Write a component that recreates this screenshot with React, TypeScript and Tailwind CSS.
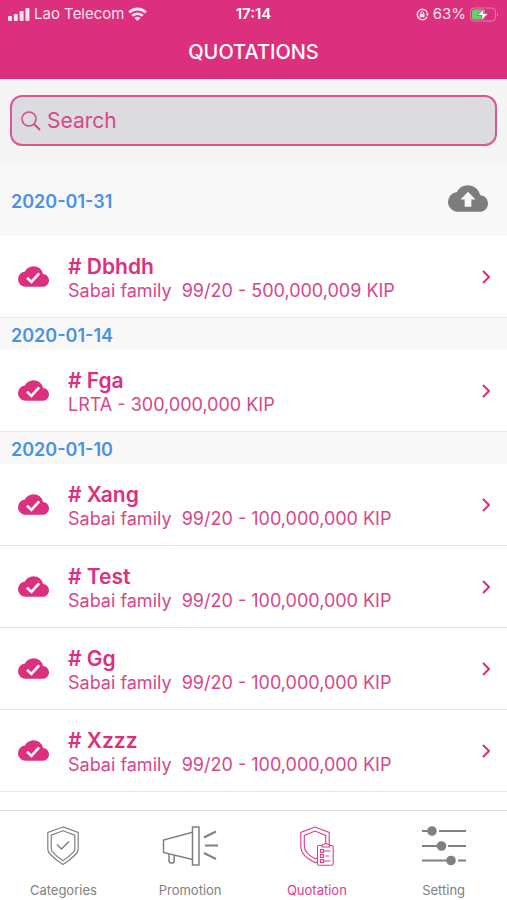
import { useState } from 'react'

const PINK = '#dc2f7d'

type Quote = { id: number; name: string; detail: string }
type Group = { date: string; canUpload?: boolean; quotes: Quote[] }

const groups: Group[] = [
  {
    date: '2020-01-31',
    canUpload: true,
    quotes: [{ id: 1, name: 'Dbhdh', detail: 'Sabai family  99/20 - 500,000,009 KIP' }],
  },
  {
    date: '2020-01-14',
    quotes: [{ id: 2, name: 'Fga', detail: 'LRTA - 300,000,000 KIP' }],
  },
  {
    date: '2020-01-10',
    quotes: [
      { id: 3, name: 'Xang', detail: 'Sabai family  99/20 - 100,000,000 KIP' },
      { id: 4, name: 'Test', detail: 'Sabai family  99/20 - 100,000,000 KIP' },
      { id: 5, name: 'Gg', detail: 'Sabai family  99/20 - 100,000,000 KIP' },
      { id: 6, name: 'Xzzz', detail: 'Sabai family  99/20 - 100,000,000 KIP' },
    ],
  },
]

function SignalIcon() {
  return (
    <svg width="22" height="13" viewBox="0 0 22 13" fill="currentColor">
      <rect x="0" y="8" width="4" height="5" rx="1" />
      <rect x="5.8" y="6" width="4" height="7" rx="1" />
      <rect x="11.6" y="3" width="4" height="10" rx="1" />
      <rect x="17.4" y="0" width="4" height="13" rx="1" />
    </svg>
  )
}

function WifiIcon() {
  return (
    <svg width="19" height="14" viewBox="0 0 19 14" fill="none" stroke="currentColor" strokeWidth="2.8">
      <path d="M1.2 5.4a11.800 11.800 0 0 1 16.600 0" />
      <path d="M4.2 8.9a7.600 7.600 0 0 1 10.600 0" strokeWidth="2.4" />
      <path d="M9.5 14 6.400 11a4.400 4.400 0 0 1 6.200 0Z" fill="currentColor" stroke="none" />
    </svg>
  )
}

function RotationLockIcon() {
  return (
    <svg width="13" height="13" viewBox="0 0 14 14" fill="none" stroke="currentColor">
      <path d="M12.2 5.2A5.6 5.6 0 1 0 12 9.4" strokeWidth="1.5" />
      <path d="M10.4 6h3.6l-1.8 2.8Z" fill="currentColor" stroke="none" />
      <rect x="4" y="6.2" width="5.2" height="3.8" rx="0.6" fill="currentColor" stroke="none" />
      <path d="M5.2 6.4V5.2a1.4 1.4 0 0 1 2.8 0v1.2" strokeWidth="1" />
    </svg>
  )
}

function BatteryIcon() {
  return (
    <svg width="29" height="15" viewBox="0 0 29 15">
      <rect x="0.5" y="1" width="25" height="13" rx="3.5" fill="none" stroke="#ea79ad" />
      <path d="M27 5.4c1.5.5 1.5 3.7 0 4.2Z" fill="#ea79ad" />
      <rect x="2" y="2.5" width="13" height="10" rx="2" fill="#63d267" />
      <path d="M14.6 1.2 7.2 8.4H12L10.7 14l7.6-7.6h-5Z" fill="#fff" stroke={PINK} strokeWidth="0.8" />
    </svg>
  )
}

function SearchIcon() {
  return (
    <svg width="20" height="20" viewBox="0 0 20 20" fill="none" stroke="currentColor" strokeWidth="1.6">
      <circle cx="8" cy="8" r="7" />
      <path d="m13 13 6 6" strokeWidth="2" />
    </svg>
  )
}

const CLOUD = 'M19.35 10.04A7.49 7.49 0 0 0 12 4C9.11 4 6.6 5.64 5.35 8.04A5.994 5.994 0 0 0 0 14c0 3.31 2.69 6 6 6h13c2.76 0 5-2.24 5-5 0-2.64-2.05-4.78-4.65-4.96Z'

function CloudUploadIcon() {
  return (
    <svg width="40" height="27" viewBox="0 4 24 16" fill="#7d7d7d">
      <path d={CLOUD} />
      <path d="M14 12.6V17h-4v-4.4H7.5L12 8l4.5 4.6Z" fill="#f8f8f8" />
    </svg>
  )
}

function CloudDoneIcon() {
  return (
    <svg width="31" height="21" viewBox="0 4 24 16" fill="currentColor" className="shrink-0">
      <path d={CLOUD} />
      <path d="m7 13 3.4 3.2 6-6.6" fill="none" stroke="#fff" strokeWidth="2" />
    </svg>
  )
}

function ChevronIcon() {
  return (
    <svg width="8" height="14" viewBox="0 0 8 14" fill="none" stroke="currentColor" strokeWidth="2" className="shrink-0">
      <path d="m1 1 6 6-6 6" />
    </svg>
  )
}

function CategoriesIcon() {
  return (
    <svg width="32" height="40" viewBox="0 0 32 40" fill="none" stroke="currentColor" strokeWidth="1.2">
      <path d="M16 1 .8 6.5V23c0 2 .7 3.5 2.2 5C6.5 31.8 11 35.5 16 38.4c5-2.9 9.5-6.6 13-10.4 1.5-1.5 2.2-3 2.2-5V6.5Z" />
      <path d="M16 4.8 4.2 9.2V22.5c0 1.5.4 2.5 1.5 3.7C8.7 29.5 12 32.3 16 34.7c4-2.4 7.3-5.2 10.3-8.5 1.1-1.2 1.5-2.2 1.5-3.7V9.2Z" />
      <path d="m10 18.5 4.5 4.5 7.5-7.5" strokeWidth="1.5" />
    </svg>
  )
}

function PromotionIcon() {
  return (
    <svg width="56" height="40" viewBox="0 0 56 40" fill="none" stroke="currentColor" strokeWidth="1.5">
      <path d="M30.5 6.2 1.5 14v12.5l29 7" />
      <rect x="30.5" y="1" width="6.5" height="38" />
      <path d="M7 28v6.5a2.6 2.6 0 0 0 5.2 0V29.2" />
      <path d="m42 11.5 12-6M43 19.5h13M42 27l12 6" strokeWidth="2" />
    </svg>
  )
}

function QuotationIcon() {
  return (
    <svg width="34" height="40" viewBox="0 0 34 40" fill="none" stroke="currentColor" strokeWidth="1.1">
      <path d="M17.3 35.500 15.500 36.800C7 32.500.8 28 .8 20V6.400L15 1l14.200 5.400V18.500h-3.500V9.400L15 5 4.300 9.400V20c0 6 4.500 9.500 11.200 13l1.800-1" />
      <rect x="17.5" y="19.5" width="15.7" height="19.8" rx="1.5" />
      <path d="M22 21v-1.500c0-.7.8-1.200 2-1.200.4-1.100 3.100-1.100 3.500 0 1.200 0 2 .5 2 1.200V21Z" fill="#fff" />
      <path d="M20.5 23.500h3v3h-3ZM20.500 28.500h3v3h-3ZM20.500 33.500h3v3h-3ZM23.500 25h7M25.500 30h3.500M23.500 35h7" />
    </svg>
  )
}

function SettingIcon() {
  return (
    <svg width="44" height="40" viewBox="0 0 44 40" stroke="currentColor" strokeWidth="2" fill="currentColor">
      <path d="M0 5h10M17 5h27M0 20h19M26 20h18M0 34.5h28M36 34.5h8" />
      <circle cx="10" cy="5" r="3.8" />
      <circle cx="19.5" cy="20" r="3.8" />
      <circle cx="29" cy="34.5" r="3.8" />
    </svg>
  )
}

const tabs = [
  { label: 'Categories', Icon: CategoriesIcon },
  { label: 'Promotion', Icon: PromotionIcon },
  { label: 'Quotation', Icon: QuotationIcon },
  { label: 'Setting', Icon: SettingIcon },
]

function QuoteRow({ quote }: { quote: Quote }) {
  return (
    <li className="border-b border-[#e6e6e6] bg-white">
      <a href="#" className="flex h-[81px] items-center pr-[17px] pl-[18px] text-[#dc2f7d]">
        <CloudDoneIcon />
        <div className="ml-[19px] min-w-0 flex-1 pt-1">
          <div className="text-[21px] leading-6 font-semibold">{`# ${quote.name}`}</div>
          <div className="truncate text-[18px] leading-6 whitespace-pre text-[#d6478a]">{quote.detail}</div>
        </div>
        <ChevronIcon />
      </a>
    </li>
  )
}

export default function App() {
  const [query, setQuery] = useState('')
  const [active, setActive] = useState('Quotation')

  const visible = groups
    .map(g => ({ ...g, quotes: g.quotes.filter(q => q.name.toLowerCase().includes(query.toLowerCase())) }))
    .filter(g => g.quotes.length > 0)

  return (
    <div className="flex min-h-screen flex-col bg-white font-[Inter,sans-serif]">
      <header className="bg-[#dc2f7d] pb-[11px] text-white">
        <div className="grid h-7 grid-cols-[1fr_auto_1fr] items-center px-2 text-[15px] text-[#fde3ef]">
          <div className="flex items-center gap-1">
            <SignalIcon />
            <span>Lao Telecom</span>
            <WifiIcon />
          </div>
          <span className="font-semibold text-white">17:14</span>
          <div className="flex items-center justify-end gap-1">
            <RotationLockIcon />
            <span>63%</span>
            <BatteryIcon />
          </div>
        </div>
        <h1 className="mt-2 text-center text-[20px] leading-8 font-medium">QUOTATIONS</h1>
      </header>

      {/* Search */}
      <div className="bg-[#f5f5f5] px-[10px] pt-4 pb-[18px]">
        <label className="flex h-[51px] items-center gap-[6px] rounded-xl border-2 border-[#d9588f] bg-[#dcdbe0] px-[9px] text-[#d6478a]">
          <SearchIcon />
          <input
            type="text"
            aria-label="Search"
            placeholder="Search"
            value={query}
            onChange={e => setQuery(e.target.value)}
            className="min-w-0 flex-1 bg-transparent text-[21px] outline-none placeholder:text-[#d6478a]"
          />
        </label>
      </div>

      {/* Quotations by date */}
      <main className="flex-1">
        {visible.map(group => (
          <section key={group.date}>
            <div className={`flex items-center justify-between bg-[#f8f8f8] pr-[19px] pl-[11px] ${group.canUpload ? 'h-[72px]' : 'h-8'}`}>
              <h2 className="pt-[3px] text-[18px] leading-6 font-semibold text-[#4a90e8]">{group.date}</h2>
              {group.canUpload && (
                <button type="button" aria-label="Upload" className="pb-1">
                  <CloudUploadIcon />
                </button>
              )}
            </div>
            <ul>
              {group.quotes.map(q => <QuoteRow key={q.id} quote={q} />)}
            </ul>
          </section>
        ))}
      </main>

      <nav className="sticky bottom-0 grid h-[90px] grid-cols-4 border-t border-[#dedede] bg-white">
        {tabs.map(({ label, Icon }) => (
          <button
            key={label}
            type="button"
            onClick={() => setActive(label)}
            className={`flex flex-col items-center pt-[15px] ${active === label ? 'text-[#dc3c8a]' : 'text-[#808080]'}`}
          >
            <Icon />
            <span className="mt-4 text-[13px] leading-4">{label}</span>
          </button>
        ))}
      </nav>
    </div>
  )
}
